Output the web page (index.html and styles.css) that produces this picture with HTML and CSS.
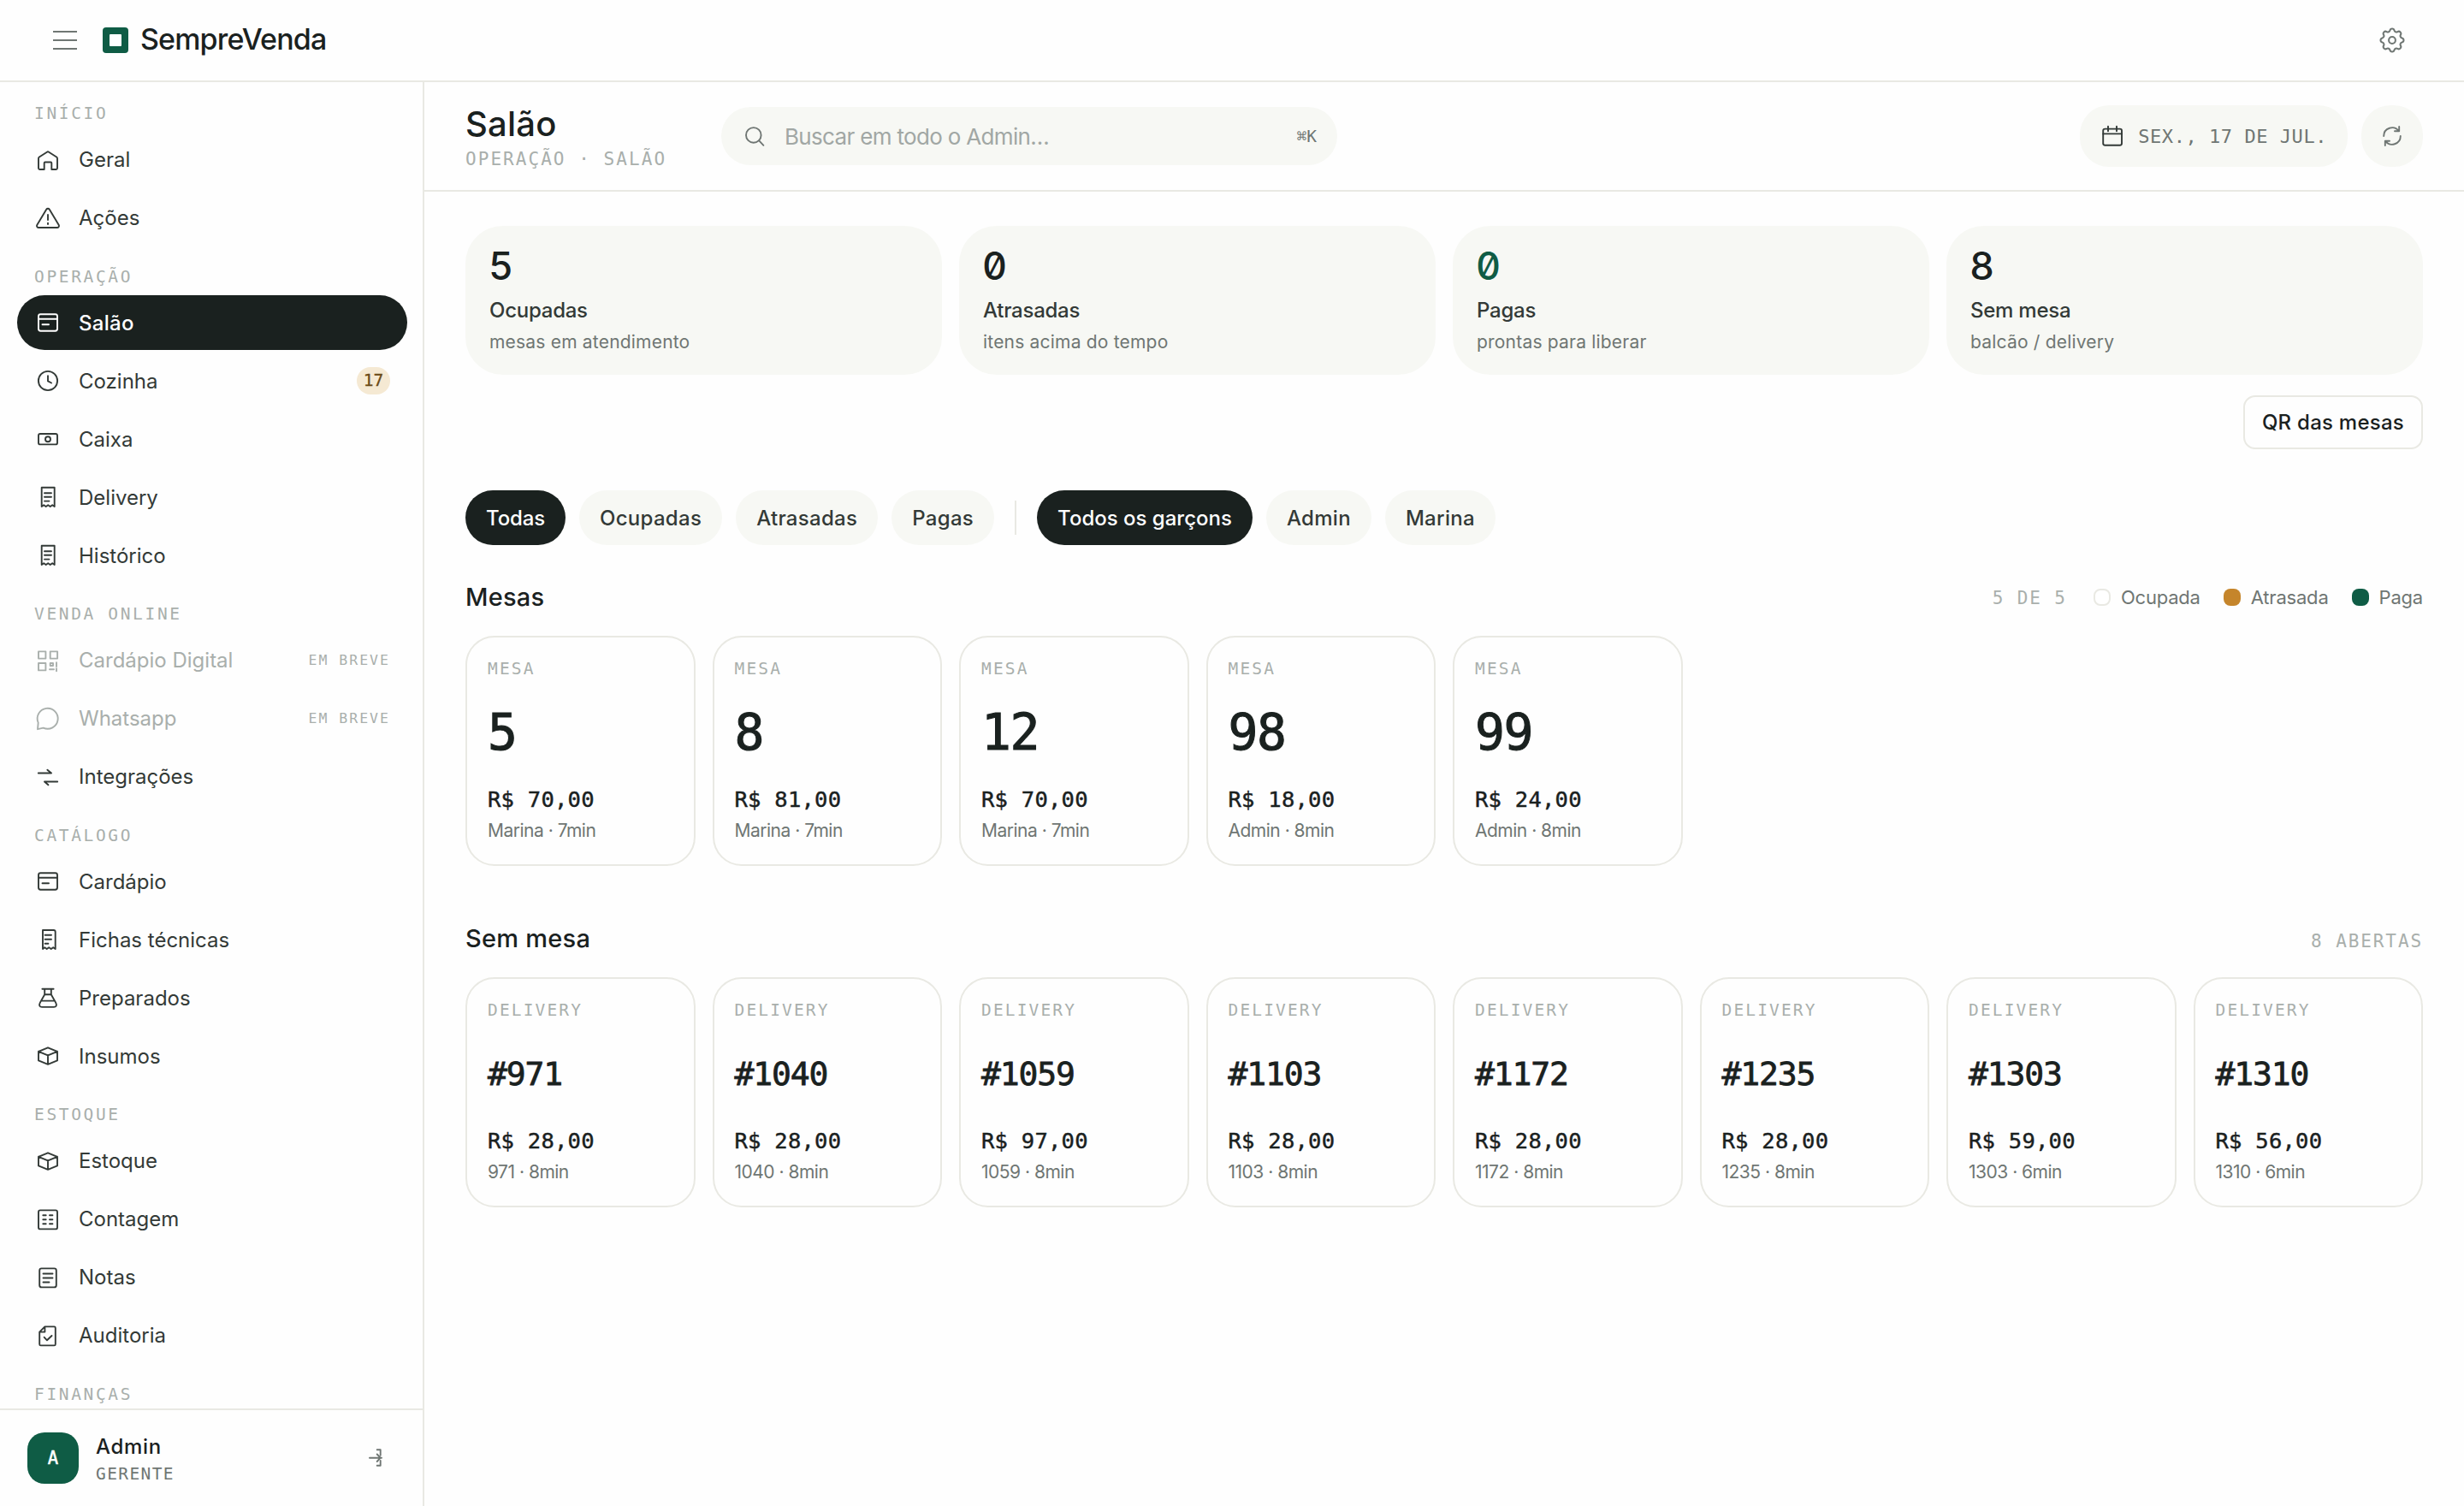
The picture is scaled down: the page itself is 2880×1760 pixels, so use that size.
FILE: index.html
```html
<!DOCTYPE html>
<html lang="pt-BR">
<head>
<meta charset="utf-8">
<title>SempreVenda</title>
<link rel="stylesheet" href="styles.css">
</head>
<body>
<svg class="sprite" aria-hidden="true">
  <symbol id="i-home" viewBox="0 0 32 32"><path d="M5 14.2a2 2 0 0 1 .9-1.7L14.9 6.7a2 2 0 0 1 2.2 0L26.1 12.5a2 2 0 0 1 .9 1.7V25.5a1.5 1.5 0 0 1-1.5 1.5H20.3V19.5a1 1 0 0 0-1-1H12.7a1 1 0 0 0-1 1V27H6.5A1.5 1.5 0 0 1 5 25.5Z"/></symbol>
  <symbol id="i-alert" viewBox="0 0 32 32"><path d="M14.2 5.7a2.1 2.1 0 0 1 3.6 0L28.6 23.8a2.1 2.1 0 0 1-1.8 3.2H5.2a2.1 2.1 0 0 1-1.8-3.2ZM16 12V18M16 21.6V23.1"/></symbol>
  <symbol id="i-card" viewBox="0 0 32 32"><rect x="5" y="6.3" width="22" height="19.4" rx="2.4"/><path d="M5 11.8H27M9.5 18.3H17"/></symbol>
  <symbol id="i-clock" viewBox="0 0 32 32"><circle cx="16" cy="16" r="11.1"/><path d="M16 10.2V16.4L20 18.5"/></symbol>
  <symbol id="i-cash" viewBox="0 0 32 32"><rect x="5" y="10" width="22" height="12.4" rx="2"/><circle cx="16" cy="16.2" r="3"/></symbol>
  <symbol id="i-receipt" viewBox="0 0 32 32"><path d="M8.7 4.7H23.7V27L21.2 25.2L18.7 27L16.2 25.2L13.7 27L11.2 25.2L8.7 27ZM12 11.3H20M12 15.7H20M12 20.6H17.5"/></symbol>
  <symbol id="i-recipe" viewBox="0 0 32 32"><path d="M10 5H22.7a2 2 0 0 1 2 2V27L22.2 25.2L19.7 27L17.2 25.2L14.7 27L12.2 25.2L10 27ZM12.6 10.8H20M12.6 15.8H20M12.6 20.8H16.4"/></symbol>
  <symbol id="i-qr" viewBox="0 0 32 32"><rect x="5" y="5.4" width="8.4" height="8.2"/><rect x="18.7" y="5.4" width="8.4" height="8.2"/><rect x="5" y="19" width="8.4" height="8.4"/><path d="M18.7 19H22V22H18.7ZM26 18.2V23M18 26.3H23M26 25.2V28.2"/></symbol>
  <symbol id="i-chat" viewBox="0 0 32 32"><path d="M4 28.2L4.7 20.6A12 12 0 1 1 10.6 26.6Z"/></symbol>
  <symbol id="i-swap" viewBox="0 0 32 32"><path d="M4.8 11.5H20L15.4 7.7M27.2 21.5H12L16.4 25.3"/></symbol>
  <symbol id="i-flask" viewBox="0 0 32 32"><path d="M9.4 5.8H22.6M12.2 5.8V12.2L6.9 21.6C5 25.2 6.6 26.9 9 26.9H23C25.4 26.9 27 25.2 25.1 21.6L19.8 12.2V5.8M12.2 12.2H19.8M8.6 19.6H23.4"/></symbol>
  <symbol id="i-box" viewBox="0 0 32 32"><path d="M16 6.3L27 10.8V21.4L16 25.9L5 21.4V10.8ZM5 10.8L16 15.3L27 10.8M16 15.3V25.9"/></symbol>
  <symbol id="i-count" viewBox="0 0 32 32"><rect x="5" y="5.4" width="22" height="22" rx="2"/><path d="M10.3 11.2H13.7M18 11.2H21.4M10.3 16.2H13.7M18 16.2H21.4M10.3 21.2H13.7M18 21.2H21.4"/></symbol>
  <symbol id="i-note" viewBox="0 0 32 32"><rect x="6.2" y="5.4" width="19.6" height="22" rx="2.4"/><path d="M10.5 11.5H21.5M10.5 16.5H21.5M10.5 21.5H17.5"/></symbol>
  <symbol id="i-audit" viewBox="0 0 32 32"><path d="M12.4 5.4H23.3a1.5 1.5 0 0 1 1.5 1.5V25.9a1.5 1.5 0 0 1-1.5 1.5H7.7a1.5 1.5 0 0 1-1.5-1.5V11.6ZM12.4 5.4V11.6H6.2M11.7 17.8L15 21.3L20.5 16"/></symbol>
  <symbol id="i-logout" viewBox="0 0 32 32"><path d="M16.7 6.3H20.7V12.7M16.7 24.7H20.7V19M8 15.7H22M16.7 11.5L20.7 15.7L16.7 20"/></symbol>
  <symbol id="i-search" viewBox="0 0 32 32"><circle cx="14.8" cy="14.9" r="8.8"/><path d="M21.2 21.4L26.4 26.8"/></symbol>
  <symbol id="i-calendar" viewBox="0 0 32 32"><rect x="5.2" y="7.6" width="21.8" height="19.2" rx="2.2"/><path d="M5.2 13.4H27M11 4.8V10.2M21 4.8V10.2"/></symbol>
  <symbol id="i-refresh" viewBox="0 0 32 32"><path d="M6.2 16A9.8 9.8 0 0 1 23.8 10.1M24.2 5V10.2H19M25.8 16A9.8 9.8 0 0 1 8.2 21.9M7.8 27V21.8H13"/></symbol>
  <symbol id="i-gear" viewBox="0 0 24 24"><path d="M10.325 4.317c.426 -1.756 2.924 -1.756 3.35 0a1.724 1.724 0 0 0 2.573 1.066c1.543 -.94 3.31 .826 2.37 2.37a1.724 1.724 0 0 0 1.065 2.572c1.756 .426 1.756 2.924 0 3.35a1.724 1.724 0 0 0 -1.066 2.573c.94 1.543 -.826 3.31 -2.37 2.37a1.724 1.724 0 0 0 -2.572 1.065c-.426 1.756 -2.924 1.756 -3.35 0a1.724 1.724 0 0 0 -2.573 -1.066c-1.543 .94 -3.31 -.826 -2.37 -2.37a1.724 1.724 0 0 0 -1.065 -2.572c-1.756 -.426 -1.756 -2.924 0 -3.35a1.724 1.724 0 0 0 1.066 -2.573c-.94 -1.543 .826 -3.31 2.37 -2.37c1 .608 2.296 .07 2.572 -1.065z"/><circle cx="12" cy="12" r="2.6"/></symbol>
</svg>
<div class="app">
  <header class="topbar">
    <button class="menu-btn" aria-label="Menu"><span></span><span></span><span></span></button>
    <div class="logo"><span></span></div>
    <div class="brand">SempreVenda</div>
    <svg class="gear"><use href="#i-gear"/></svg>
  </header>
  <div class="shell">
    <aside class="sidebar">
      <nav class="nav">
        <h6 class="nav-label">INÍCIO</h6>
        <a class="nav-item"><svg class="icon"><use href="#i-home"/></svg><span>Geral</span></a>
        <a class="nav-item"><svg class="icon"><use href="#i-alert"/></svg><span>Ações</span></a>
        <h6 class="nav-label">OPERAÇÃO</h6>
        <a class="nav-item active"><svg class="icon"><use href="#i-card"/></svg><span>Salão</span></a>
        <a class="nav-item"><svg class="icon"><use href="#i-clock"/></svg><span>Cozinha</span><b class="count">17</b></a>
        <a class="nav-item"><svg class="icon"><use href="#i-cash"/></svg><span>Caixa</span></a>
        <a class="nav-item"><svg class="icon"><use href="#i-receipt"/></svg><span>Delivery</span></a>
        <a class="nav-item"><svg class="icon"><use href="#i-receipt"/></svg><span>Histórico</span></a>
        <h6 class="nav-label">VENDA ONLINE</h6>
        <a class="nav-item soon"><svg class="icon"><use href="#i-qr"/></svg><span>Cardápio Digital</span><i class="tag">EM BREVE</i></a>
        <a class="nav-item soon"><svg class="icon"><use href="#i-chat"/></svg><span>Whatsapp</span><i class="tag">EM BREVE</i></a>
        <a class="nav-item"><svg class="icon"><use href="#i-swap"/></svg><span>Integrações</span></a>
        <h6 class="nav-label">CATÁLOGO</h6>
        <a class="nav-item"><svg class="icon"><use href="#i-card"/></svg><span>Cardápio</span></a>
        <a class="nav-item"><svg class="icon"><use href="#i-recipe"/></svg><span>Fichas técnicas</span></a>
        <a class="nav-item"><svg class="icon"><use href="#i-flask"/></svg><span>Preparados</span></a>
        <a class="nav-item"><svg class="icon"><use href="#i-box"/></svg><span>Insumos</span></a>
        <h6 class="nav-label">ESTOQUE</h6>
        <a class="nav-item"><svg class="icon"><use href="#i-box"/></svg><span>Estoque</span></a>
        <a class="nav-item"><svg class="icon"><use href="#i-count"/></svg><span>Contagem</span></a>
        <a class="nav-item"><svg class="icon"><use href="#i-note"/></svg><span>Notas</span></a>
        <a class="nav-item"><svg class="icon"><use href="#i-audit"/></svg><span>Auditoria</span></a>
        <h6 class="nav-label">FINANÇAS</h6>
      </nav>
      <footer class="user">
        <div class="avatar">A</div>
        <div class="user-text"><div class="user-name">Admin</div><div class="user-role">GERENTE</div></div>
        <svg class="icon logout"><use href="#i-logout"/></svg>
      </footer>
    </aside>
    <main class="main">
      <header class="page-head">
        <div class="titles"><h1 class="title">Salão</h1><div class="crumbs">OPERAÇÃO · SALÃO</div></div>
        <div class="search"><svg class="icon"><use href="#i-search"/></svg><span class="placeholder">Buscar em todo o Admin…</span><kbd class="kbd">⌘K</kbd></div>
        <div class="date"><svg class="icon"><use href="#i-calendar"/></svg><span>SEX., 17 DE JUL.</span></div>
        <button class="refresh" aria-label="Atualizar"><svg class="icon"><use href="#i-refresh"/></svg></button>
      </header>
      <div class="content">
        <section class="stats">
          <div class="stat"><div class="stat-value">5</div><div class="stat-name">Ocupadas</div><div class="stat-hint">mesas em atendimento</div></div>
          <div class="stat"><div class="stat-value">0</div><div class="stat-name">Atrasadas</div><div class="stat-hint">itens acima do tempo</div></div>
          <div class="stat"><div class="stat-value good">0</div><div class="stat-name">Pagas</div><div class="stat-hint">prontas para liberar</div></div>
          <div class="stat"><div class="stat-value">8</div><div class="stat-name">Sem mesa</div><div class="stat-hint">balcão / delivery</div></div>
        </section>
        <div class="actions"><button class="qr-btn">QR das mesas</button></div>
        <div class="filters">
          <button class="chip on">Todas</button>
          <button class="chip">Ocupadas</button>
          <button class="chip">Atrasadas</button>
          <button class="chip">Pagas</button>
          <span class="divider"></span>
          <button class="chip on">Todos os garçons</button>
          <button class="chip">Admin</button>
          <button class="chip">Marina</button>
        </div>
        <section class="group">
          <div class="group-head">
            <h2>Mesas</h2>
            <div class="legend">
              <span class="mono-note">5 DE 5</span>
              <span class="key"><i class="dot open"></i>Ocupada</span>
              <span class="key"><i class="dot late"></i>Atrasada</span>
              <span class="key"><i class="dot paid"></i>Paga</span>
            </div>
          </div>
          <div class="grid">
            <article class="card"><div class="kind">MESA</div><div class="num">5</div><div class="price">R$ 70,00</div><div class="meta">Marina · 7min</div></article>
            <article class="card"><div class="kind">MESA</div><div class="num">8</div><div class="price">R$ 81,00</div><div class="meta">Marina · 7min</div></article>
            <article class="card"><div class="kind">MESA</div><div class="num">12</div><div class="price">R$ 70,00</div><div class="meta">Marina · 7min</div></article>
            <article class="card"><div class="kind">MESA</div><div class="num">98</div><div class="price">R$ 18,00</div><div class="meta">Admin · 8min</div></article>
            <article class="card"><div class="kind">MESA</div><div class="num">99</div><div class="price">R$ 24,00</div><div class="meta">Admin · 8min</div></article>
          </div>
        </section>
        <section class="group">
          <div class="group-head"><h2>Sem mesa</h2><div class="legend"><span class="mono-note">8 ABERTAS</span></div></div>
          <div class="grid">
            <article class="card"><div class="kind">DELIVERY</div><div class="num order">#971</div><div class="price">R$ 28,00</div><div class="meta">971 · 8min</div></article>
            <article class="card"><div class="kind">DELIVERY</div><div class="num order">#1040</div><div class="price">R$ 28,00</div><div class="meta">1040 · 8min</div></article>
            <article class="card"><div class="kind">DELIVERY</div><div class="num order">#1059</div><div class="price">R$ 97,00</div><div class="meta">1059 · 8min</div></article>
            <article class="card"><div class="kind">DELIVERY</div><div class="num order">#1103</div><div class="price">R$ 28,00</div><div class="meta">1103 · 8min</div></article>
            <article class="card"><div class="kind">DELIVERY</div><div class="num order">#1172</div><div class="price">R$ 28,00</div><div class="meta">1172 · 8min</div></article>
            <article class="card"><div class="kind">DELIVERY</div><div class="num order">#1235</div><div class="price">R$ 28,00</div><div class="meta">1235 · 8min</div></article>
            <article class="card"><div class="kind">DELIVERY</div><div class="num order">#1303</div><div class="price">R$ 59,00</div><div class="meta">1303 · 6min</div></article>
            <article class="card"><div class="kind">DELIVERY</div><div class="num order">#1310</div><div class="price">R$ 56,00</div><div class="meta">1310 · 6min</div></article>
          </div>
        </section>
      </div>
    </main>
  </div>
</div>
</body>
</html>
```
FILE: styles.css
```css
:root {
  --ink: #1a211f;
  --text: #333a37;
  --muted: #6f7673;
  --faint: #a9afac;
  --line: #e9e9e3;
  --soft: #f7f8f4;
  --green: #0f5c45;
  --amber: #c5852b;
  --sans: Inter, "Liberation Sans", sans-serif;
  --mono: "DejaVu Sans Mono", "Liberation Mono", monospace;
}

* { box-sizing: border-box; }

body {
  margin: 0;
  background: #fefefe;
  color: var(--ink);
  font-family: var(--sans);
  font-size: 24px;
}

h1, h2, h6 { margin: 0; font-weight: 500; }
button { font: inherit; color: inherit; border: 0; background: none; padding: 0; }
.sprite { display: none; }

.app { display: flex; flex-direction: column; height: 1760px; overflow: hidden; }

.icon {
  flex: none;
  width: 32px;
  height: 32px;
}
.icon, .gear {
  fill: none;
  stroke: currentColor;
  stroke-width: 1.9;
  stroke-linecap: round;
  stroke-linejoin: round;
}

/* Top bar */
.topbar {
  flex: none;
  display: flex;
  align-items: center;
  height: 96px;
  padding: 0 66px 0 62px;
  border-bottom: 2px solid var(--line);
}
.menu-btn { display: flex; flex-direction: column; gap: 7.4px; width: 28px; }
.menu-btn span { height: 2.4px; background: var(--muted); }
.logo {
  display: grid;
  place-items: center;
  width: 30px;
  height: 30px;
  margin: 0 14px 0 30px;
  border-radius: 4px;
  background: var(--green);
}
.logo span { width: 14px; height: 14px; background: #fff; border-radius: 1px; }
.brand { padding-bottom: 2px; font-size: 34px; font-weight: 500; line-height: 44px; letter-spacing: -.85px; }
.gear { width: 36px; height: 36px; margin-left: auto; color: var(--muted); stroke-width: 1.35; }

.shell { flex: 1; display: flex; min-height: 0; }

/* Sidebar */
.sidebar {
  flex: none;
  display: flex;
  flex-direction: column;
  width: 496px;
  border-right: 2px solid var(--line);
}
.nav {
  flex: 1;
  display: flex;
  flex-direction: column;
  gap: 4px;
  min-height: 0;
  padding: 0 18px 0 20px;
  overflow: hidden;
}
.nav-label {
  flex: none;
  height: 50.5px;
  padding: 18px 0 0 20px;
  color: var(--faint);
  font-family: var(--mono);
  font-size: 19.5px;
  font-weight: 400;
  line-height: 30px;
  letter-spacing: 2.65px;
}
.nav-label:first-child { height: 54.6px; padding-top: 21.5px; }
.nav-item {
  flex: none;
  display: flex;
  align-items: center;
  gap: 20px;
  height: 64px;
  padding: 0 20px;
  border-radius: 32px;
  color: var(--text);
}
.nav-item.active { background: var(--ink); color: #fff; font-weight: 500; letter-spacing: .3px; }
.nav-item.soon { color: var(--faint); }
.tag {
  margin-left: auto;
  font-family: var(--mono);
  font-size: 16.5px;
  font-style: normal;
  letter-spacing: 2px;
}
.count {
  margin-left: auto;
  width: 39px;
  border-radius: 16px;
  background: #f5e9d3;
  color: #6b4a16;
  font: 400 19.5px/32px var(--mono);
  text-align: center;
  -webkit-text-stroke: .3px currentColor;
}

.user {
  flex: none;
  display: flex;
  align-items: center;
  gap: 20px;
  height: 114px;
  padding: 0 38px 0 32px;
  border-top: 2px solid var(--line);
}
.avatar {
  width: 60px;
  height: 60px;
  border-radius: 20px;
  background: var(--green);
  color: #fff;
  font: 400 20.5px/60px var(--mono);
  text-align: center;
  -webkit-text-stroke: .5px currentColor;
}
.user-text { padding-top: 4px; }
.user-name { font-weight: 500; line-height: 34px; letter-spacing: .65px; }
.user-role { color: var(--muted); font-family: var(--mono); font-size: 19.5px; line-height: 30px; letter-spacing: 1.4px; }
.logout { margin-left: auto; color: var(--muted); }

/* Page header */
.main { flex: 1; display: flex; flex-direction: column; min-width: 0; }
.page-head {
  flex: none;
  display: flex;
  align-items: center;
  height: 128px;
  padding: 0 48px;
  border-bottom: 2px solid var(--line);
}
.titles { width: 299px; padding-top: 5px; }
.title { font-size: 40px; line-height: 48px; letter-spacing: .2px; }
.crumbs { color: var(--faint); font-family: var(--mono); font-size: 21px; line-height: 34px; letter-spacing: 2.05px; white-space: nowrap; }
.search {
  display: flex;
  align-items: center;
  width: 720px;
  height: 68px;
  padding: 0 24px 0 23px;
  border-radius: 34px;
  background: var(--soft);
  color: var(--muted);
}
.placeholder { margin-left: 19px; color: #a1a7a4; font-size: 26px; letter-spacing: -.67px; }
.kbd { margin-left: auto; font-family: var(--mono); font-size: 19.5px; }
.date {
  display: flex;
  align-items: center;
  gap: 14px;
  height: 72px;
  margin-left: auto;
  padding: 0 24px 0 22px;
  border-radius: 34px;
  background: var(--soft);
  font-family: var(--mono);
  font-size: 22px;
  letter-spacing: .55px;
  color: var(--muted);
}
.date .icon { color: var(--text); }
.refresh {
  display: grid;
  place-items: center;
  width: 72px;
  height: 72px;
  margin-left: 16px;
  border-radius: 34px;
  background: var(--soft);
  color: var(--muted);
}

/* Content */
.content { display: flex; flex-direction: column; padding: 40px 48px; }
.stats { display: grid; grid-template-columns: repeat(4, 1fr); gap: 20px; }
.stat { height: 174px; padding: 22px 28px; border-radius: 44px; background: var(--soft); }
.stat-value {
  font-size: 45px;
  font-weight: 500;
  line-height: 50px;
  text-indent: -1px;
  font-feature-settings: "zero", "tnum";
}
.stat-value.good { color: var(--green); }
.stat-name { margin-top: 10px; color: var(--text); font-weight: 500; line-height: 34px; letter-spacing: -.25px; }
.stat-hint { color: var(--muted); font-size: 21px; line-height: 39px; letter-spacing: .2px; }

.actions { display: flex; justify-content: flex-end; margin-top: 24px; }
.qr-btn {
  height: 63px;
  padding: 0 20px;
  border: 2px solid var(--line);
  border-radius: 14px;
  font-weight: 500;
  letter-spacing: .25px;
}

.filters { display: flex; align-items: center; gap: 16px; margin-top: 48px; }
.chip {
  height: 64px;
  padding: 0 24px;
  border-radius: 32px;
  background: var(--soft);
  color: var(--text);
  font-weight: 500;
  letter-spacing: .3px;
}
.chip.on { background: var(--ink); color: #fff; letter-spacing: 0; }
.chip.on:first-child { letter-spacing: -.15px; }
.divider { width: 2px; height: 40px; margin: 0 8px; background: var(--line); }

.group-head { display: flex; align-items: center; justify-content: space-between; height: 106px; padding-top: 16px; }
.group + .group .group-head { height: 130px; padding-top: 40px; }
.group-head h2 { font-size: 29px; line-height: 36px; letter-spacing: .25px; }
.legend { display: flex; align-items: center; color: var(--muted); font-size: 22px; letter-spacing: -.2px; }
.mono-note { padding-top: 1px; color: var(--faint); font-family: var(--mono); font-size: 21px; letter-spacing: 1.9px; }
.group + .group .mono-note { padding-top: 6px; }
.key { display: flex; align-items: center; gap: 12px; margin-left: 27px; }
.key:nth-of-type(2) { margin-left: 31px; }
.key:last-child { letter-spacing: -.2px; }
.dot { width: 20px; height: 20px; border-radius: 8px; }
.dot.open { border: 2px solid var(--line); background: #fff; }
.dot.late { background: var(--amber); }
.dot.paid { background: var(--green); }

.grid { display: grid; grid-template-columns: repeat(8, 1fr); gap: 20px; }
.card {
  display: flex;
  flex-direction: column;
  height: 269px;
  padding: 24px 24px 22px;
  border: 2px solid var(--line);
  border-radius: 34px;
}
.kind { color: var(--faint); font-family: var(--mono); font-size: 19.5px; line-height: 26px; letter-spacing: 2.15px; }
.num {
  flex: 1;
  display: flex;
  align-items: center;
  font-family: var(--mono);
  font-size: 58px;
  letter-spacing: -1.4px;
  -webkit-text-stroke: 1.1px currentColor;
}
.num.order { font-size: 38px; letter-spacing: -1.1px; -webkit-text-stroke-width: .8px; }
.price {
  margin-bottom: 3.5px;
  font-family: var(--mono);
  font-size: 25.5px;
  line-height: 34px;
  letter-spacing: .25px;
  -webkit-text-stroke: .45px currentColor;
}
.meta { color: var(--muted); font-size: 21px; line-height: 34px; letter-spacing: -.5px; }
```
